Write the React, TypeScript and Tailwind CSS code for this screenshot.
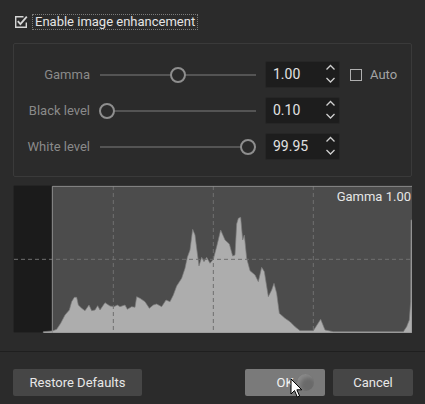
import React from "react";

const font = { fontFamily: "Roboto, 'Noto Sans', sans-serif" };

// histogram outline in 3x chart units (viewBox origin is the frame's top-left * 3)
const histPoints = [
  [130, 459], [130, 455], [157, 453], [170, 448], [182, 430], [195, 405], [208, 390], [215, 365],
  [223, 352], [230, 352], [235, 375], [245, 385], [255, 392], [267, 375], [275, 392], [285, 390],
  [293, 377], [300, 390], [315, 368], [330, 378], [342, 380], [352, 375], [360, 380], [375, 375],
  [382, 388], [395, 380], [405, 382], [410, 350], [420, 355], [435, 365], [448, 385], [460, 375],
  [470, 372], [485, 380], [498, 360], [510, 365], [520, 345], [530, 318], [545, 295], [555, 265],
  [562, 232], [570, 210], [578, 148], [585, 165], [590, 205], [597, 258], [605, 232], [612, 245],
  [620, 232], [630, 250], [640, 238], [650, 200], [662, 150], [675, 180], [688, 192], [698, 228],
  [705, 225], [710, 132], [715, 115], [722, 112], [728, 180], [733, 165], [740, 235], [750, 272],
  [765, 285], [775, 305], [785, 262], [793, 275], [805, 350], [815, 330], [822, 310], [830, 340],
  [838, 400], [855, 415], [870, 425], [885, 440], [900, 452], [940, 452], [962, 418], [975, 450],
  [1000, 455], [1210, 455], [1220, 440], [1228, 420], [1232, 365], [1233, 120], [1236, 120], [1236, 459],
]
  .map((p) => p.join(","))
  .join(" ");

const rows = [
  { label: "Gamma", value: "1.00", pos: 0.5, auto: true },
  { label: "Black level", value: "0.10", pos: 0 },
  { label: "White level", value: "99.95", pos: 1 },
];

function SpinBox({ value }: { value: string }) {
  return (
    <div className="ml-[9px] flex h-[27px] w-[75px] items-center justify-between rounded-[2px] border border-[#262626] bg-[#1d1d1d] pl-[7px] pr-[3px]">
      <span className="text-[14px] text-[#e2e2e2]">{value}</span>
      <svg width="11" height="22" viewBox="0 0 11 22" fill="none" stroke="#d0d0d0" strokeWidth="1.3">
        <path d="M1.5 5.5 L5.5 1.5 L9.5 5.5" />
        <path d="M1.5 14 L5.5 18 L9.5 14" />
      </svg>
    </div>
  );
}

function Slider({ pos }: { pos: number }) {
  return (
    <div className="relative ml-[9px] h-[16px] w-[157px]">
      <div className="absolute left-[1px] right-0 top-[7px] h-[2px] bg-[#545454]" />
      <div
        className="absolute top-0 h-[16px] w-[16px] rounded-full border-2 border-[#8e8e8e] bg-[#2b2b2b]"
        style={{ left: pos * 141 }}
      />
    </div>
  );
}

export default function App() {
  return (
    <div className="flex h-[404px] w-[425px] flex-col bg-[#2b2b2b]" style={font}>
      <div className="mt-[14px] flex h-[16px] items-center pl-[14px]">
        <svg width="14" height="14" viewBox="0 0 14 14" fill="none" stroke="#d6d6d6" strokeWidth="1.4">
          <path d="M9.5 1.7 H1.7 V12.3 H12.3 V7.5" />
          <path d="M3.8 6.2 L6.4 9.2 L12.8 1.6" strokeWidth="1.8" />
        </svg>
        <span className="ml-[4px] border border-dotted border-[#7a7a7a] px-[2px] text-[13px] leading-[14px] text-[#e4e4e4]">
          Enable image enhancement
        </span>
      </div>

      <div className="mx-[13px] mt-[13px] flex h-[134px] flex-col gap-[9px] rounded-[2px] border border-[#3a3a3a] pt-[17px]">
        {rows.map((r) => (
          <div key={r.label} className="flex h-[27px] items-center">
            <div className="w-[76px] text-right text-[13px] text-[#8a8a8a]">{r.label}</div>
            <Slider pos={r.pos} />
            <SpinBox value={r.value} />
            {r.auto && (
              <div className="ml-[10px] flex items-center">
                <div className="h-[12px] w-[12px] border border-[#b0b0b0]" />
                <span className="ml-[8px] text-[13px] text-[#a4a4a4]">Auto</span>
              </div>
            )}
          </div>
        ))}
      </div>

      <div className="relative mx-[13px] mt-[8px] h-[148px] bg-[#1b1b1b]">
        <svg className="h-full w-full" viewBox="39 15 1197 444" preserveAspectRatio="none">
          <rect x="39" y="15" width="1197" height="444" fill="#1b1b1b" stroke="#2f2f2f" strokeWidth="3" />
          <rect x="156" y="18" width="1080" height="441" fill="#4c4c4c" />
          <polygon points={histPoints} fill="#adadad" stroke="#7c7c7c" strokeWidth="2" />
          <g stroke="#6f6f6f" strokeWidth="3" strokeDasharray="12 9">
            <line x1="340" y1="18" x2="340" y2="459" />
            <line x1="640" y1="18" x2="640" y2="459" />
            <line x1="940" y1="18" x2="940" y2="459" />
            <line x1="42" y1="238" x2="1236" y2="238" />
          </g>
          <path d="M157 459 V19 H1236" fill="none" stroke="#8c8c8c" strokeWidth="3" />
        </svg>
        <span className="absolute right-[1px] top-[2px] text-[13px] text-[#e6e6e6]">Gamma 1.00</span>
      </div>

      <div className="mt-[18px] h-px bg-[#1f1f1f]" />

      <div className="mt-[17px] flex h-[27px] items-center justify-between pl-[13px] pr-[12px] text-[13px]">
        <button className="h-full w-[129px] rounded-[2px] bg-[#464646] text-[#e8e8e8]">Restore Defaults</button>
        <div className="flex h-full gap-[8px]">
          <button className="relative h-full w-[80px] rounded-[2px] bg-[#7a7a7a] text-[#f2f2f2]">
            OK
            <span className="absolute left-[52px] top-[5px] h-[17px] w-[17px] rounded-full bg-[#6a6a6a] shadow-[inset_3px_3px_4px_#8a8a8a]" />
            <svg className="absolute left-[45px] top-[9px]" width="14" height="21" viewBox="0 0 14 21">
              <path d="M1 1 V16 L4.5 12.5 L7.3 19 L9.6 18 L6.9 11.8 H11.8 Z" fill="#ffffff" stroke="#000000" strokeWidth="1" strokeLinejoin="round" />
            </svg>
          </button>
          <button className="h-full w-[80px] rounded-[2px] bg-[#464646] text-[#e8e8e8]">Cancel</button>
        </div>
      </div>
    </div>
  );
}
